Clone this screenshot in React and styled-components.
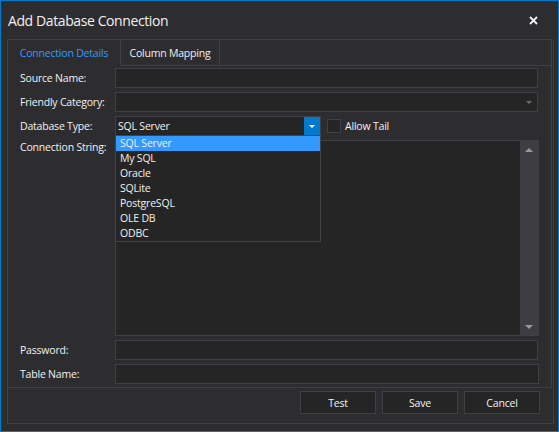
import React from 'react';
import styled, { createGlobalStyle } from 'styled-components';

const GlobalStyle = createGlobalStyle`
  html, body {
    margin: 0;
    padding: 0;
    background: #2d2d30;
  }
  * {
    box-sizing: border-box;
  }
`;

const Window = styled.div`
  width: 559px;
  height: 432px;
  display: flex;
  flex-direction: column;
  background: #2d2d30;
  border: 1px solid #007acc;
  font-family: "Open Sans", "Noto Sans", sans-serif;
  font-size: 10.5px;
  letter-spacing: -0.2px;
  color: #f1f1f1;
`;

const TitleBar = styled.div`
  height: 38px;
  flex: none;
  display: flex;
  align-items: center;
  justify-content: space-between;
  padding: 0 20px 0 7px;
  font-size: 14px;
  letter-spacing: -0.4px;
  color: #f1f1f1;
`;

const CloseButton = styled.div`
  width: 10px;
  height: 10px;
  display: flex;
  align-items: center;
  justify-content: center;
`;

const Frame = styled.div`
  flex: 1;
  display: flex;
  flex-direction: column;
  margin: 0 4px 7px 6px;
  border: 1px solid #3f3f46;
  border-top: none;
`;

const TabControl = styled.div`
  display: flex;
  flex-direction: column;
  margin-right: 1px;
`;

const TabStrip = styled.div`
  display: flex;
  height: 27px;
`;

const Tab = styled.div`
  width: ${p => p.$width}px;
  display: flex;
  align-items: center;
  justify-content: center;
  border-top: 1px solid #3f3f46;
  border-right: 1px solid #3f3f46;
  border-bottom: 1px solid ${p => (p.$active ? 'transparent' : '#3f3f46')};
  color: ${p => (p.$active ? '#3399ff' : '#f1f1f1')};
  padding-top: 1px;
`;

const TabFiller = styled.div`
  flex: 1;
  border-top: 1px solid #3f3f46;
  border-right: 1px solid #3f3f46;
  border-bottom: 1px solid #3f3f46;
`;

const TabPage = styled.div`
  height: 322px;
  border-right: 1px solid #3f3f46;
  border-bottom: 1px solid #3f3f46;
  padding: 2px 13px 3px 12px;
  display: grid;
  grid-template-columns: 95px 1fr;
  grid-template-rows: 20px 20px 20px 1fr 20px 20px;
  row-gap: 4px;
`;

const Label = styled.div`
  display: flex;
  align-items: ${p => (p.$top ? 'flex-start' : 'center')};
  line-height: 15px;
  white-space: nowrap;
`;

const Input = styled.div`
  height: 20px;
  background: #252526;
  border: 1px solid #3f3f46;
  margin-right: ${p => p.$mr || 0}px;
`;

const Combo = styled.div`
  position: relative;
  height: 20px;
  width: ${p => (p.$width ? `${p.$width}px` : 'auto')};
  background: #252526;
  border: 1px solid #3f3f46;
  display: flex;
  align-items: stretch;
`;

const ComboText = styled.div`
  flex: 1;
  display: flex;
  align-items: center;
  padding-left: 2px;
  color: #f1f1f1;
`;

const ComboArrow = styled.div`
  width: 16px;
  display: flex;
  align-items: center;
  justify-content: center;
  padding-top: 1px;
  background: ${p => (p.$open ? '#007acc' : 'transparent')};
`;

const Triangle = styled.div`
  width: 0;
  height: 0;
  border-left: ${p => p.$size}px solid transparent;
  border-right: ${p => p.$size}px solid transparent;
  ${p => (p.$up ? 'border-bottom' : 'border-top')}: ${p => p.$size}px solid ${p => p.$color};
`;

const DropList = styled.div`
  position: absolute;
  top: 100%;
  left: -1px;
  width: 206px;
  background: #252526;
  border: 1px solid #434346;
  z-index: 2;
`;

const DropItem = styled.div`
  height: 15px;
  line-height: 15px;
  padding-left: 4px;
  background: ${p => (p.$selected ? '#3399ff' : 'transparent')};
  color: #f1f1f1;
`;

const TypeRow = styled.div`
  display: flex;
  align-items: center;
  gap: 6px;
`;

const CheckLabel = styled.div`
  display: flex;
  align-items: center;
  gap: 4px;
`;

const CheckBox = styled.div`
  width: 14px;
  height: 14px;
  border: 1px solid #3f3f46;
  background: #252526;
`;

const TextArea = styled.div`
  display: flex;
  justify-content: flex-end;
  background: #252526;
  border: 1px solid #3f3f46;
  margin-right: -1px;
`;

const ScrollBar = styled.div`
  width: 18px;
  background: #3e3e42;
  display: flex;
  flex-direction: column;
  justify-content: space-between;
  align-items: center;
  padding: 7px 0 6px;
`;

const ButtonBar = styled.div`
  flex: 1;
  display: flex;
  justify-content: flex-end;
  align-items: flex-start;
  gap: 6px;
  padding: 3px 13px 0 0;
`;

const Button = styled.div`
  width: 76px;
  height: 23px;
  display: flex;
  align-items: center;
  justify-content: center;
  background: #252526;
  border: 1px solid #3f3f46;
  color: #f1f1f1;
`;

const dbTypes = ['SQL Server', 'My SQL', 'Oracle', 'SQLite', 'PostgreSQL', 'OLE DB', 'ODBC'];

export default function App() {
  return (
    <>
      <GlobalStyle />
      <Window>
        <TitleBar>
          <span>Add Database Connection</span>
          <CloseButton>
            <svg width="9" height="9" viewBox="0 0 9 9">
              <path d="M1 1 L8 8 M8 1 L1 8" stroke="#f1f1f1" strokeWidth="1.8" />
            </svg>
          </CloseButton>
        </TitleBar>
        <Frame>
          <TabControl>
            <TabStrip>
              <Tab $active $width={113}>Connection Details</Tab>
              <Tab $width={99}>Column Mapping</Tab>
              <TabFiller />
            </TabStrip>
            <TabPage>
              <Label>Source Name:</Label>
              <Input />

              <Label>Friendly Category:</Label>
              <Combo>
                <ComboText />
                <ComboArrow>
                  <Triangle $size={3.5} $color="#6d6d70" />
                </ComboArrow>
              </Combo>

              <Label>Database Type:</Label>
              <TypeRow>
                <Combo $width={206}>
                  <ComboText>SQL Server</ComboText>
                  <ComboArrow $open>
                    <Triangle $size={3.5} $color="#ffffff" />
                  </ComboArrow>
                  <DropList>
                    {dbTypes.map((t, i) => (
                      <DropItem key={t} $selected={i === 0}>{t}</DropItem>
                    ))}
                  </DropList>
                </Combo>
                <CheckLabel>
                  <CheckBox />
                  <span>Allow Tail</span>
                </CheckLabel>
              </TypeRow>

              <Label $top>Connection String:</Label>
              <TextArea>
                <ScrollBar>
                  <Triangle $up $size={4} $color="#999999" />
                  <Triangle $size={4} $color="#999999" />
                </ScrollBar>
              </TextArea>

              <Label>Password:</Label>
              <Input />

              <Label>Table Name:</Label>
              <Input $mr={-1} />
            </TabPage>
          </TabControl>
          <ButtonBar>
            <Button>Test</Button>
            <Button>Save</Button>
            <Button>Cancel</Button>
          </ButtonBar>
        </Frame>
      </Window>
    </>
  );
}
